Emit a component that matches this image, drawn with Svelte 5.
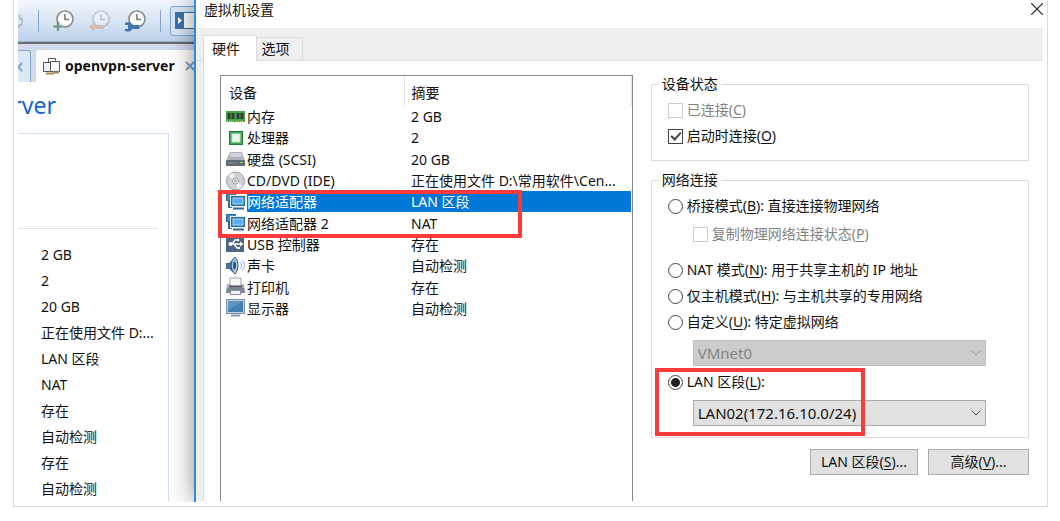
<script lang="ts">
  type Device = { icon: string; name: string; summary: string }

  const devices: Device[] = [
    { icon: 'memory', name: '内存', summary: '2 GB' },
    { icon: 'cpu', name: '处理器', summary: '2' },
    { icon: 'disk', name: '硬盘 (SCSI)', summary: '20 GB' },
    { icon: 'cd', name: 'CD/DVD (IDE)', summary: '正在使用文件 D:\\常用软件\\Cen...' },
    { icon: 'net', name: '网络适配器', summary: 'LAN 区段' },
    { icon: 'net', name: '网络适配器 2', summary: 'NAT' },
    { icon: 'usb', name: 'USB 控制器', summary: '存在' },
    { icon: 'sound', name: '声卡', summary: '自动检测' },
    { icon: 'printer', name: '打印机', summary: '存在' },
    { icon: 'display', name: '显示器', summary: '自动检测' }
  ]

  const overview = ['2 GB', '2', '20 GB', '正在使用文件 D:...', 'LAN 区段', 'NAT', '存在', '自动检测', '存在', '自动检测']

  let selected = $state(4)
  let mode = $state('lan')
  let autoConnect = $state(true)
</script>

{#snippet clock()}
  <circle cx="12" cy="9" r="8" fill="#fff" stroke="#888" stroke-width="1.600" />
  <path d="M12 4v5.500h4" fill="none" stroke="#777" stroke-width="1.600" />
{/snippet}

{#snippet deviceIcon(icon: string)}
  <svg class="device-icon" viewBox="0 0 20 20" aria-hidden="true">
    {#if icon === 'memory'}
      <rect x="0" y="4" width="19" height="11" fill="#43a447" />
      <path d="M1.500 6h3v6h-3zM5.500 6h3v6h-3zM10.500 6h3v6h-3zM14.500 6h3v6h-3z" fill="#333f36" />
      <path d="M1 14.500h8M10 14.500h8" stroke="#c8d98a" stroke-width="1.500" stroke-dasharray="1 1" />
    {:else if icon === 'cpu'}
      <rect x="3.500" y="3.500" width="13" height="13" fill="#3fa75a" stroke="#227a3b" />
      <rect x="6" y="6" width="8" height="8" fill="#f1f5f1" stroke="#c5e6cb" />
    {:else if icon === 'disk'}
      <path d="M4 3h12l3 9H0z" fill="#aeb2ba" />
      <path d="M5 4h10l1 4H4z" fill="#d0d3d9" />
      <rect x="0" y="11" width="19" height="6" rx="1" fill="#626a75" />
      <path d="M2 14h9" stroke="#8d949e" />
      <rect x="14" y="13" width="3" height="1" fill="#8ede6b" />
    {:else if icon === 'cd'}
      <circle cx="9.500" cy="10" r="9" fill="#ced1d6" stroke="#9ba0a8" />
      <path d="M9.500 10L2.500 5a8 8 0 0 1 5-3zM9.500 10l7 5a8 8 0 0 1-5 3z" fill="#f4f5f7" />
      <circle cx="9.500" cy="10" r="3" fill="#e9ebee" stroke="#9ba0a8" />
      <circle cx="9.500" cy="10" r="1" fill="#fff" stroke="#8c929b" />
    {:else if icon === 'net'}
      <path d="M.5 1.500h9v7h-9z" fill="#3b8ac9" stroke="#2c6795" />
      <path d="M3 9v6h3" fill="none" stroke="#2c6795" stroke-width="2" />
      <rect x="4.500" y="3.500" width="15" height="11" fill="#2c6f9f" stroke="#e6f2fb" />
      <rect x="7" y="6" width="10" height="6" fill="#56adf0" stroke="#a9d8fb" />
      <path d="M7 16.500h11" stroke="#2c6795" stroke-width="2" />
    {:else if icon === 'usb'}
      <rect x="0" y="1" width="18" height="17" rx="1" fill="#4b6784" />
      <path d="M3 10h12M6 10l3-4h3M8 10l3 4h2" fill="none" stroke="#fff" stroke-width="1.300" />
      <circle cx="4.500" cy="10" r="2" fill="#fff" />
      <path d="M14 7.500l3.500 2.500-3.500 2.500z" fill="#fff" />
      <circle cx="12" cy="6" r="1.300" fill="#fff" />
      <rect x="12" y="13" width="2" height="2" fill="#fff" />
    {:else if icon === 'sound'}
      <path d="M0 7h3l6-6v17l-6-5H0z" fill="#4d6f91" />
      <path d="M9 1c-5 4-5 13 0 17 4-4 4-13 0-17z" fill="#a9c8e4" stroke="#36597c" />
      <ellipse cx="8.500" cy="9.500" rx="1.500" ry="4" fill="#2b5b8d" />
      <path d="M14 6c2 2 2 5 0 7M16 4c3 3 3 8 0 11" fill="none" stroke="#7fb3e0" />
    {:else if icon === 'printer'}
      <path d="M1 7h17l1 9H0z" fill="#7e8594" />
      <path d="M1 7h17v4H1z" fill="#b0b4bf" />
      <path d="M4 1h11v8H4z" fill="#f5f5f8" />
      <path d="M4 9V1h11v8" fill="none" stroke="#a3a7b0" />
      <path d="M3 9.500h13" stroke="#4c505c" stroke-width="2" />
      <rect x="4.500" y="13.500" width="10" height="4" fill="#f4f4f8" stroke="#8d8b9c" />
    {:else}
      <rect x=".5" y="1.500" width="18" height="14" fill="#c3ced8" stroke="#7893aa" />
      <rect x="2" y="3" width="15" height="11" fill="#447fb2" />
      <path d="M2 3h15L2 12z" fill="#6296c2" />
      <path d="M5 17.500h9" stroke="#8c9ba8" stroke-width="2" />
    {/if}
  </svg>
{/snippet}

<div class="frame">
  <section class="workstation">
    <div class="toolbar">
      <svg class="tool-cut" viewBox="0 0 6 20" aria-hidden="true">
        <path d="M0 5h2v3h2v6H0M0 17l3-3" fill="none" stroke="#a9b9c8" stroke-width="1.500" />
      </svg>
      <span class="divider"></span>
      <div class="snapshots">
        <button aria-label="Take snapshot">
          <svg viewBox="0 0 22 22">
            {@render clock()}
            <path d="M5 12v9M1 16.500h9" stroke="#d8e5f4" stroke-width="5" />
            <path d="M5 12v9M.5 16.500h9" stroke="#709e84" stroke-width="2.500" />
          </svg>
        </button>
        <button aria-label="Revert" disabled>
          <svg viewBox="0 0 22 22">
            {@render clock()}
            <path d="M0 17l5-4.500V15h10v4H5v2.500z" fill="#d9803a" />
          </svg>
        </button>
        <button aria-label="Manage snapshots">
          <svg viewBox="0 0 22 22">
            {@render clock()}
            <path d="M0 13c3-2 6-1 7 2h5c3-2 4 5 0 4H7c-1 3-4 3-7 2l0-2h3v-4H0z" fill="#4077ad" />
          </svg>
        </button>
      </div>
      <span class="divider"></span>
      <button class="view-button" aria-label="Library">
        <svg viewBox="0 0 32 18">
          <rect x=".5" y=".5" width="31" height="16" fill="#fff" stroke="#3a6da4" />
          <rect width="9" height="17" fill="#3c73ad" />
          <path d="M3 5l4 3.500L3 12z" fill="#fff" />
        </svg>
      </button>
    </div>

    <div class="vm-tabs">
      <button class="vm-tab-previous" aria-label="Close tab">
        <svg viewBox="0 0 10 10"><path d="M-3 1l7 8M4 1l-7 8" stroke="#83a7c4" stroke-width="2" /></svg>
      </button>
      <div class="vm-tab">
        <svg class="vm-icon" viewBox="0 0 17 17" aria-hidden="true">
          <path d="M5.500.500h7v8h-7z" fill="#fff" stroke="#555" />
          <path d="M.5 4.500h9v9h-9z" fill="#eef3fa" stroke="#555" />
          <path d="M7.500 3.500h9v10h-9z" fill="#f5f8fc" stroke="#555" />
          <path d="M3 15.500h8M10 14.500h6" stroke="#a38c55" stroke-width="2" />
        </svg>
        <span>openvpn-server</span>
        <button aria-label="Close openvpn-server">
          <svg viewBox="0 0 10 10"><path d="M1 1l8 8M9 1L1 9" stroke="#83a7c4" stroke-width="2" /></svg>
        </button>
      </div>
    </div>

    <h1>rver</h1>
    <div class="summary">
      <ul>
        {#each overview as item}
          <li>{item}</li>
        {/each}
      </ul>
    </div>
  </section>

  <section class="dialog">
    <header>
      <h2>虚拟机设置</h2>
      <button aria-label="关闭">
        <svg viewBox="0 0 12 12"><path d="M0 0l12 12M12 0L0 12" stroke="#222" stroke-width="1.200" /></svg>
      </button>
    </header>

    <div class="dialog-tabs">
      <button class="active">硬件</button>
      <button>选项</button>
    </div>

    <div class="panel">
      <div class="device-list">
        <table>
          <thead>
            <tr><th>设备</th><th>摘要</th></tr>
          </thead>
          <tbody>
            {#each devices as device, i}
              <tr class:selected={i === selected} onclick={() => (selected = i)}>
                <td><div class="device">{@render deviceIcon(device.icon)}<span>{device.name}</span></div></td>
                <td>{device.summary}</td>
              </tr>
            {/each}
          </tbody>
        </table>
        <div class="mark mark-adapters"></div>
      </div>

      <div class="settings">
        <fieldset>
          <legend>设备状态</legend>
          <label class="disabled"><input type="checkbox" disabled /><span>已连接(<u>C</u>)</span></label>
          <label><input type="checkbox" bind:checked={autoConnect} /><span>启动时连接(<u>O</u>)</span></label>
        </fieldset>

        <fieldset>
          <legend>网络连接</legend>
          <label><input type="radio" value="bridged" bind:group={mode} /><span>桥接模式(<u>B</u>): 直接连接物理网络</span></label>
          <label class="replicate disabled"><input type="checkbox" disabled /><span>复制物理网络连接状态(<u>P</u>)</span></label>
          <label><input type="radio" value="nat" bind:group={mode} /><span>NAT 模式(<u>N</u>): 用于共享主机的 IP 地址</span></label>
          <label><input type="radio" value="host" bind:group={mode} /><span>仅主机模式(<u>H</u>): 与主机共享的专用网络</span></label>
          <label><input type="radio" value="custom" bind:group={mode} /><span>自定义(<u>U</u>): 特定虚拟网络</span></label>
          <div class="select disabled">
            <select aria-label="特定虚拟网络" disabled={mode !== 'custom'}><option>VMnet0</option></select>
            <svg viewBox="0 0 10 6" aria-hidden="true"><path d="M1 1l4 4 4-4" /></svg>
          </div>
          <div class="lan">
            <label><input type="radio" value="lan" bind:group={mode} /><span>LAN 区段(<u>L</u>):</span></label>
            <div class="select">
              <select aria-label="LAN 区段"><option>LAN02(172.16.10.0/24)</option></select>
              <svg viewBox="0 0 10 6" aria-hidden="true"><path d="M1 1l4 4 4-4" /></svg>
            </div>
            <div class="mark mark-lan"></div>
          </div>
        </fieldset>

        <div class="actions">
          <button>LAN 区段(<u>S</u>)...</button>
          <button>高级(<u>V</u>)...</button>
        </div>
      </div>
    </div>
  </section>
</div>

<style>
  :global(body) {
    background: #fff;
  }
  .frame {
    display: flex;
    margin: 0 12px 0 13px;
    padding: 0 4px 4px;
    border: 1px solid #dcdcdc;
    border-top: 0;
    font: 14px/22px 'Noto Sans', 'Noto Sans CJK SC', sans-serif;
    color: #111;
  }
  button {
    font: inherit;
    color: inherit;
    padding: 0;
    border: 0;
    background: none;
  }
  svg {
    display: block;
    flex-shrink: 0;
  }
  u {
    text-underline-offset: 2px;
  }

  /* main window, partly covered by the dialog */
  .workstation {
    width: 176px;
    flex-shrink: 0;
    display: flex;
    flex-direction: column;
    overflow: hidden;
  }
  .toolbar {
    display: flex;
    align-items: center;
    height: 42px;
    box-sizing: border-box;
    background: linear-gradient(#f3f8fd, #bed2ea);
    border-bottom: 1px solid #a2b3c6;
  }
  .tool-cut {
    width: 6px;
    height: 20px;
  }
  .divider {
    width: 1px;
    height: 22px;
    margin: 0 14px;
    flex-shrink: 0;
    background: #7fa6d0;
  }
  .divider:last-of-type {
    margin: 0 9px 0 13px;
  }
  .snapshots {
    display: flex;
    gap: 14px;
  }
  .snapshots svg {
    width: 22px;
    height: 22px;
  }
  .snapshots button:disabled {
    opacity: 0.35;
  }
  .view-button {
    flex-shrink: 0;
    padding: 5px 4px;
    border: 1px solid #7fa6d6;
    border-radius: 3px;
    background: #d9e7f7;
  }
  .view-button svg {
    width: 32px;
    height: 18px;
  }
  .vm-tabs {
    display: flex;
    align-items: flex-end;
    gap: 5px;
    height: 40px;
    box-sizing: border-box;
    flex-shrink: 0;
    background: #d3daeb;
    border-top: 2px solid #686c73;
  }
  .vm-tab-previous {
    width: 13px;
    height: 32px;
    flex-shrink: 0;
    border: 1px solid #7fa6cc;
    border-width: 1px 1px 0 0;
    border-radius: 0 3px 0 0;
    background: #dbe8f5;
  }
  .vm-tab-previous svg,
  .vm-tab button svg {
    width: 10px;
    height: 10px;
  }
  .vm-tab {
    display: flex;
    align-items: center;
    flex-shrink: 0;
    height: 32px;
    padding-left: 7px;
    border-radius: 3px 3px 0 0;
    background: #fff;
    font-weight: 700;
  }
  .vm-icon {
    width: 17px;
    height: 17px;
    margin-right: 5px;
  }
  .vm-tab button {
    margin: 0 10px;
  }
  h1 {
    display: flex;
    justify-content: flex-end;
    width: 38px;
    height: 51px;
    margin: 0;
    overflow: hidden;
    font-size: 23px;
    font-weight: 400;
    line-height: 46px;
    color: #0f66cf;
  }
  .summary {
    flex: 1;
    width: 150px;
    border-top: 1px solid #d3e2f6;
    border-right: 1px solid #d3e2f6;
  }
  ul {
    list-style: none;
    width: 117px;
    margin: 94px 0 0;
    padding: 13px 0 0 23px;
    border-top: 1px solid #e3e3e3;
    white-space: nowrap;
  }
  li {
    line-height: 26px;
  }

  .dialog {
    flex: 1;
    min-width: 0;
    position: relative;
    background: #fff;
    border-left: 2px solid #2b8ddb;
    clip-path: inset(0 0 0 -30px);
    box-shadow: 0 0 24px rgba(0, 0, 0, 0.45);
  }
  header {
    display: flex;
    justify-content: space-between;
    align-items: flex-start;
    height: 28px;
    padding-left: 8px;
  }
  h2 {
    margin: 0;
    font-size: 14px;
    font-weight: 400;
    line-height: 19px;
  }
  header svg {
    width: 12px;
    height: 12px;
    margin-top: 3px;
  }
  .dialog-tabs {
    display: flex;
    align-items: flex-end;
    height: 33px;
    padding-left: 7px;
    background: #efefef;
    box-shadow: inset 0 -1px #dcdcdc;
  }
  .dialog-tabs button {
    width: 46px;
    height: 24px;
    padding-right: 8px;
    border: 1px solid #dcdcdc;
    border-left: 0;
  }
  .dialog-tabs .active {
    width: 54px;
    height: 26px;
    border-left: 1px solid #dcdcdc;
    border-bottom: 0;
    background: #fff;
  }
  .panel {
    display: grid;
    grid-template-columns: 12fr 11fr;
    gap: 18px;
    margin-left: 7px;
    padding: 0 14px 0 16px;
    border-left: 1px solid #dcdcdc;
    box-shadow: -7px 0 #efefef;
  }

  .device-list {
    position: relative;
    min-width: 0;
    margin-top: 14px;
    border: 1px solid #828790;
    border-bottom: 0;
  }
  table {
    width: 100%;
    table-layout: fixed;
    border-collapse: collapse;
    line-height: 21px;
  }
  th {
    height: 30px;
    padding: 3px 7px 0;
    box-sizing: border-box;
    border-right: 1px solid #e5e5e5;
    font-weight: 400;
    text-align: left;
  }
  th:first-child {
    width: 183px;
    padding-left: 8px;
  }
  tbody {
    height: 213px;
  }
  td {
    padding: 0 7px;
    overflow: hidden;
    text-overflow: ellipsis;
    white-space: nowrap;
  }
  td:first-child {
    padding: 0 5px;
  }
  .device {
    display: flex;
    align-items: center;
    gap: 1px;
  }
  .device-icon {
    width: 20px;
    height: 20px;
  }
  .selected td {
    color: #fff;
    background: linear-gradient(#0078d7, #0078d7) no-repeat;
  }
  .selected td:first-child {
    background-position: 26px 0;
  }
  .mark {
    position: absolute;
    box-sizing: border-box;
    border: 4px solid #fb3b3b;
    pointer-events: none;
  }
  .mark-adapters {
    top: 114px;
    left: -3px;
    width: 304px;
    height: 48px;
  }

  .settings {
    min-width: 0;
    padding: 12px 0 26px;
  }
  fieldset {
    min-width: 0;
    margin: 0 0 8px;
    padding: 2px 42px 11px 16px;
    border: 1px solid #dcdcdc;
  }
  fieldset + fieldset {
    margin-bottom: 11px;
  }
  legend {
    margin-left: -9px;
    padding: 0 3px;
  }
  label {
    display: flex;
    align-items: center;
    gap: 4px;
    height: 26px;
    white-space: nowrap;
  }
  .disabled {
    color: #838383;
  }
  .replicate {
    margin: 2px 0 10px 25px;
  }
  input {
    appearance: none;
    width: 15px;
    height: 15px;
    margin: 0;
    border: 1px solid #444;
    background: #fff;
  }
  input:disabled {
    border-color: #ccc;
  }
  input[type='checkbox']:checked::before {
    content: '';
    display: block;
    width: 4px;
    height: 8px;
    margin: 0 0 0 4px;
    border: solid #444;
    border-width: 0 2px 2px 0;
    transform: rotate(42deg);
  }
  input[type='radio'] {
    border-radius: 50%;
  }
  input[type='radio']:checked {
    background: radial-gradient(circle, #222 4px, #fff 5px);
  }
  .select {
    position: relative;
    margin: 5px 0 3px 25px;
  }
  select {
    appearance: none;
    display: block;
    width: 100%;
    height: 26px;
    padding: 0 20px 0 4px;
    border: 1px solid #adadad;
    border-radius: 0;
    background: #e1e1e1;
    color: #111;
    font: inherit;
    font-size: 15px;
  }
  select:disabled {
    border-color: #bfbfbf;
    background: #ccc;
    color: #838383;
    opacity: 1;
  }
  .select svg {
    position: absolute;
    top: 10px;
    right: 5px;
    width: 10px;
    height: 6px;
    fill: none;
    stroke: #444;
    pointer-events: none;
  }
  .select.disabled svg {
    stroke: #999;
  }
  .lan {
    position: relative;
  }
  .lan .select {
    margin-bottom: 0;
  }
  .mark-lan {
    top: -1px;
    left: -13px;
    width: 210px;
    height: 68px;
  }
  .actions {
    display: flex;
    justify-content: flex-end;
    gap: 10px;
  }
  .actions button {
    width: 108px;
    height: 26px;
    border: 1px solid #adadad;
    background: #e1e1e1;
  }
  .actions button:last-child {
    width: 101px;
  }
</style>
